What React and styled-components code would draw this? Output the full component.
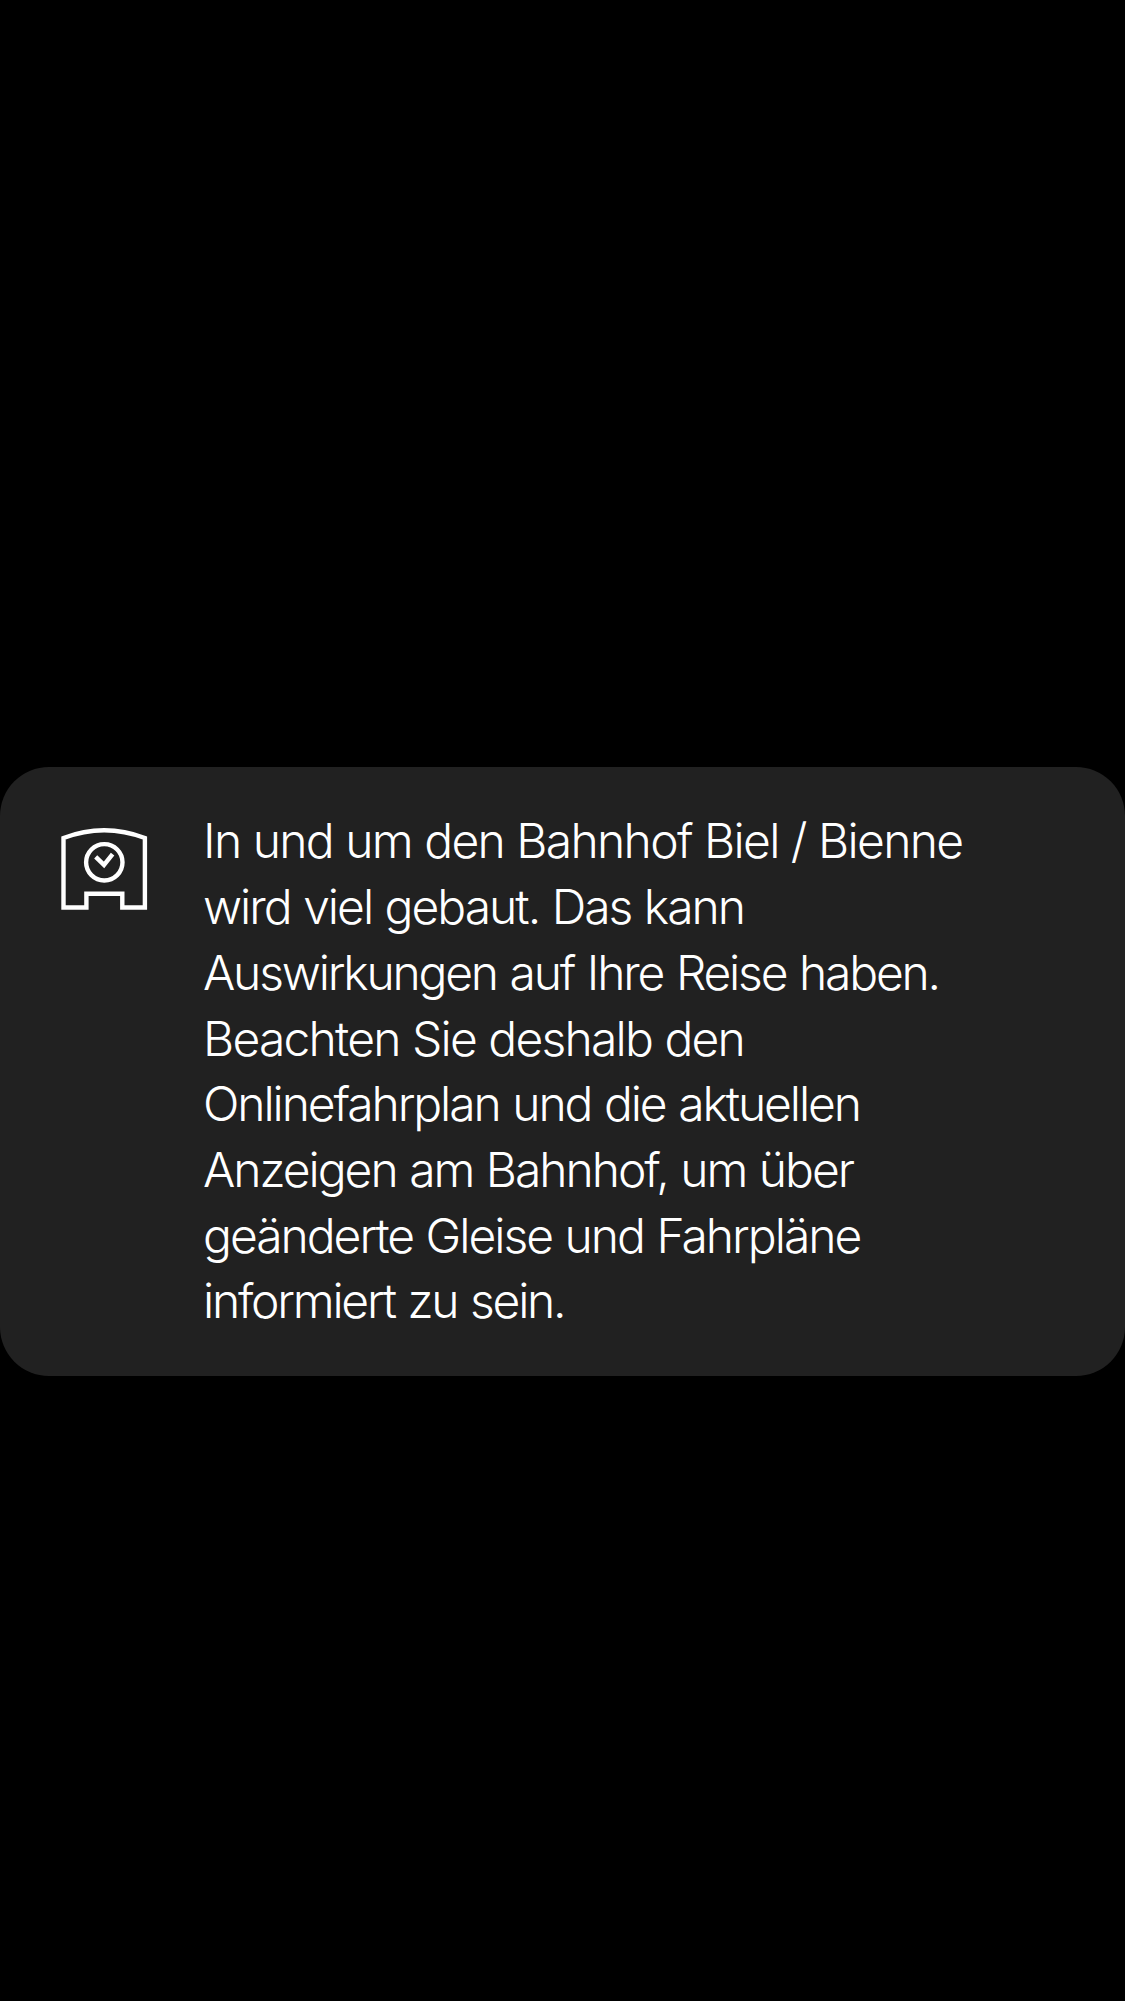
import React from "react";
import styled, { createGlobalStyle } from "styled-components";

const GlobalStyle = createGlobalStyle`
  * { box-sizing: border-box; }
  body { margin: 0; background: #000; }
`;

const Screen = styled.main`
  min-height: 2001px;
  padding-top: 767px;
  background: #000;
`;

const NoticeCard = styled.section`
  display: flex;
  align-items: flex-start;
  gap: 43px;
  height: 609px;
  padding: 41.4px 48px 0 50px;
  border-radius: 49px;
  background: #212121;
`;

const StationIcon = styled.svg`
  flex: none;
  width: 110px;
  height: 105px;
  margin-top: 6.6px;
  fill: none;
  stroke: #fff;
  stroke-width: 4.4;
`;

const Message = styled.p`
  margin: 0;
  color: #fff;
  font-family: Inter, "Liberation Sans", Arial, sans-serif;
  font-weight: 300;
  font-size: 48px;
  line-height: 65.7px;
`;

const Line = styled.span`
  display: block;
  white-space: nowrap;
  letter-spacing: ${(p) => p.$spacing}px;
  word-spacing: ${(p) => -2 * (p.$spacing + 1.5)}px;
`;

const lines = [
  ["In und um den Bahnhof Biel / Bienne", -1.68],
  ["wird viel gebaut. Das kann", -2],
  ["Auswirkungen auf Ihre Reise haben.", -2.2],
  ["Beachten Sie deshalb den", -1.77],
  ["Onlinefahrplan und die aktuellen", -2.1],
  ["Anzeigen am Bahnhof, um über", -2.04],
  ["geänderte Gleise und Fahrpläne", -2.02],
  ["informiert zu sein.", -2.25],
];

export default function App() {
  return (
    <>
      <GlobalStyle />
      <Screen>
        <NoticeCard>
          <StationIcon viewBox="0 0 110 105" aria-hidden="true">
            <path d="M13.5 23Q54.2 7.5 94.9 23V92.5H72.3V78.7H36.4V92.5H13.5Z" />
            <circle cx="54.3" cy="47.3" r="18.2" />
            <path d="M45.7 41.9L54 49.9L62.6 39.1" />
          </StationIcon>
          <Message>
            {lines.map(([text, spacing]) => (
              <Line key={text} $spacing={spacing}>{text}</Line>
            ))}
          </Message>
        </NoticeCard>
      </Screen>
    </>
  );
}
